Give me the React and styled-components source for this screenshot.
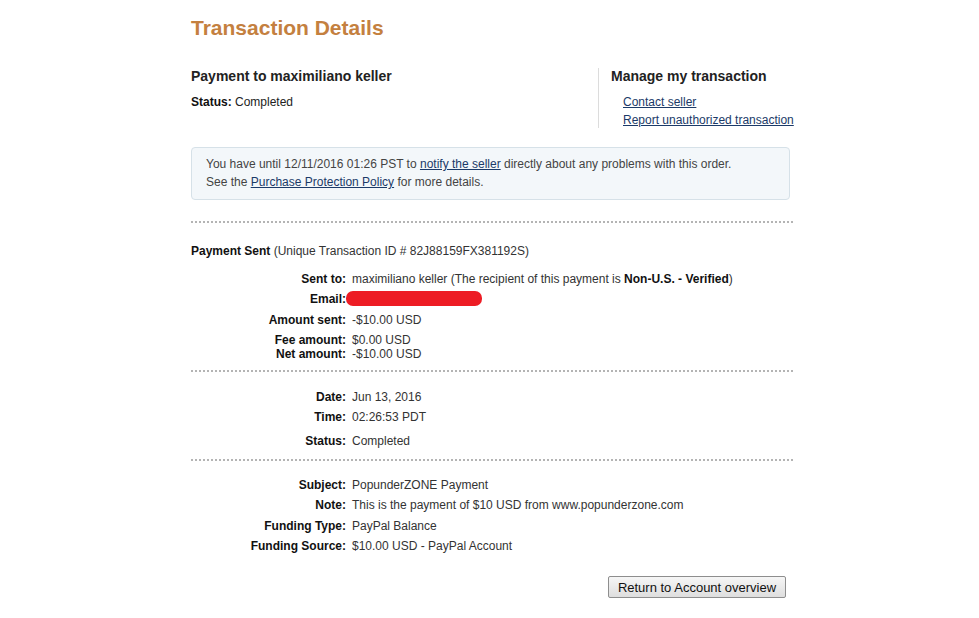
import React from "react";
import styled, { createGlobalStyle } from "styled-components";

const Global = createGlobalStyle`
  html, body { margin: 0; padding: 0; background: #fff; }
  body { font-family: "Liberation Sans", Arial, sans-serif; font-size: 12px; color: #333; }
`;

const Page = styled.div`
  width: 602px;
  margin-left: 191px;
  padding-top: 16px;
  padding-bottom: 18px;
  display: flex;
  flex-direction: column;
`;

const Title = styled.h1`
  margin: 0;
  font-size: 21px;
  line-height: 24px;
  font-weight: bold;
  color: #c4803f;
`;

const Header = styled.div`
  display: flex;
  margin-top: 28px;
`;

const LeftCol = styled.div`
  width: 407px;
  flex: none;
`;

const RightCol = styled.div`
  flex: 1;
  white-space: nowrap;
  border-left: 1px solid #dcdcdc;
  padding-left: 12px;
  padding-bottom: 1px;
  display: flex;
  flex-direction: column;
`;

const Heading = styled.h2`
  margin: 0;
  font-size: 14px;
  line-height: 17px;
  font-weight: bold;
  color: #222;
`;

const Line = styled.div`
  margin-top: ${(p) => p.$mt || 0}px;
  margin-left: ${(p) => p.$ml || 0}px;
  line-height: 14px;
  color: #222;
`;

const Strong = styled.b`
  color: #111;
`;

const Link = styled.a`
  color: #1b3a68;
  text-decoration: underline;
  cursor: pointer;
`;

const Notice = styled.div`
  margin-top: 19px;
  margin-right: 3px;
  background: #f3f7fa;
  border: 1px solid #d6e1e8;
  border-radius: 4px;
  padding: 7px 14px 8px;
  line-height: 18px;
  color: #444;
`;

const Divider = styled.div`
  margin-top: ${(p) => p.$mt}px;
  border-top: 2px dotted #b4b4b4;
`;

const Caption = styled.div`
  margin-top: 21px;
  line-height: 14px;
  color: #333;
`;

const Row = styled.div`
  display: grid;
  grid-template-columns: 155px 1fr;
  column-gap: 6px;
  margin-top: ${(p) => p.$mt}px;
  line-height: 14px;
`;

const Label = styled.div`
  text-align: right;
  font-weight: bold;
  color: #111;
`;

const Value = styled.div`
  color: #333;
  white-space: nowrap;
`;

const Redacted = styled.span`
  display: inline-block;
  vertical-align: top;
  margin-top: -1px;
  margin-left: -6px;
  width: 136px;
  height: 15px;
  border-radius: 7px;
  background: #ed1c24;
`;

const Actions = styled.div`
  display: flex;
  justify-content: flex-end;
  margin-top: 23px;
  padding-right: 7px;
`;

const Button = styled.button`
  height: 22px;
  width: 178px;
  padding: 0 6px;
  font-family: "Liberation Sans", Arial, sans-serif;
  font-size: 13px;
  color: #111;
  background: linear-gradient(#f6f6f6, #dedede);
  border: 1px solid #8e8e8e;
  border-radius: 2px;
  cursor: pointer;
`;

const details1 = [
  { label: "Sent to:", mt: 14, value: (
    <>maximiliano keller (The recipient of this payment is <Strong>Non-U.S. - Verified</Strong>)</>
  ) },
  { label: "Email:", mt: 6, value: <Redacted /> },
  { label: "Amount sent:", mt: 7, value: "-$10.00 USD" },
  { label: "Fee amount:", mt: 6, value: "$0.00 USD" },
  { label: "Net amount:", mt: 0, value: "-$10.00 USD" },
];

const details2 = [
  { label: "Date:", mt: 18, value: "Jun 13, 2016" },
  { label: "Time:", mt: 6, value: "02:26:53 PDT" },
  { label: "Status:", mt: 10, value: "Completed" },
];

const details3 = [
  { label: "Subject:", mt: 17, value: "PopunderZONE Payment" },
  { label: "Note:", mt: 6, value: "This is the payment of $10 USD from www.popunderzone.com" },
  { label: "Funding Type:", mt: 7, value: "PayPal Balance" },
  { label: "Funding Source:", mt: 6, value: "$10.00 USD - PayPal Account" },
];

const Rows = ({ items }) =>
  items.map((r) => (
    <Row key={r.label} $mt={r.mt}>
      <Label>{r.label}</Label>
      <Value>{r.value}</Value>
    </Row>
  ));

export default function App() {
  return (
    <>
      <Global />
      <Page>
        <Title>Transaction Details</Title>
        <Header>
          <LeftCol>
            <Heading>Payment to maximiliano keller</Heading>
            <Line $mt={10}><Strong>Status:</Strong> Completed</Line>
          </LeftCol>
          <RightCol>
            <Heading>Manage my transaction</Heading>
            <Line $mt={10} $ml={12}><Link>Contact seller</Link></Line>
            <Line $mt={4} $ml={12}><Link>Report unauthorized transaction</Link></Line>
          </RightCol>
        </Header>
        <Notice>
          You have until 12/11/2016 01:26 PST to <Link>notify the seller</Link> directly about any problems with this order.
          <br />
          See the <Link>Purchase Protection Policy</Link> for more details.
        </Notice>
        <Divider $mt={21} />
        <Caption><Strong>Payment Sent</Strong> (Unique Transaction ID # 82J88159FX381192S)</Caption>
        <Rows items={details1} />
        <Divider $mt={9} />
        <Rows items={details2} />
        <Divider $mt={11} />
        <Rows items={details3} />
        <Actions>
          <Button>Return to Account overview</Button>
        </Actions>
      </Page>
    </>
  );
}
